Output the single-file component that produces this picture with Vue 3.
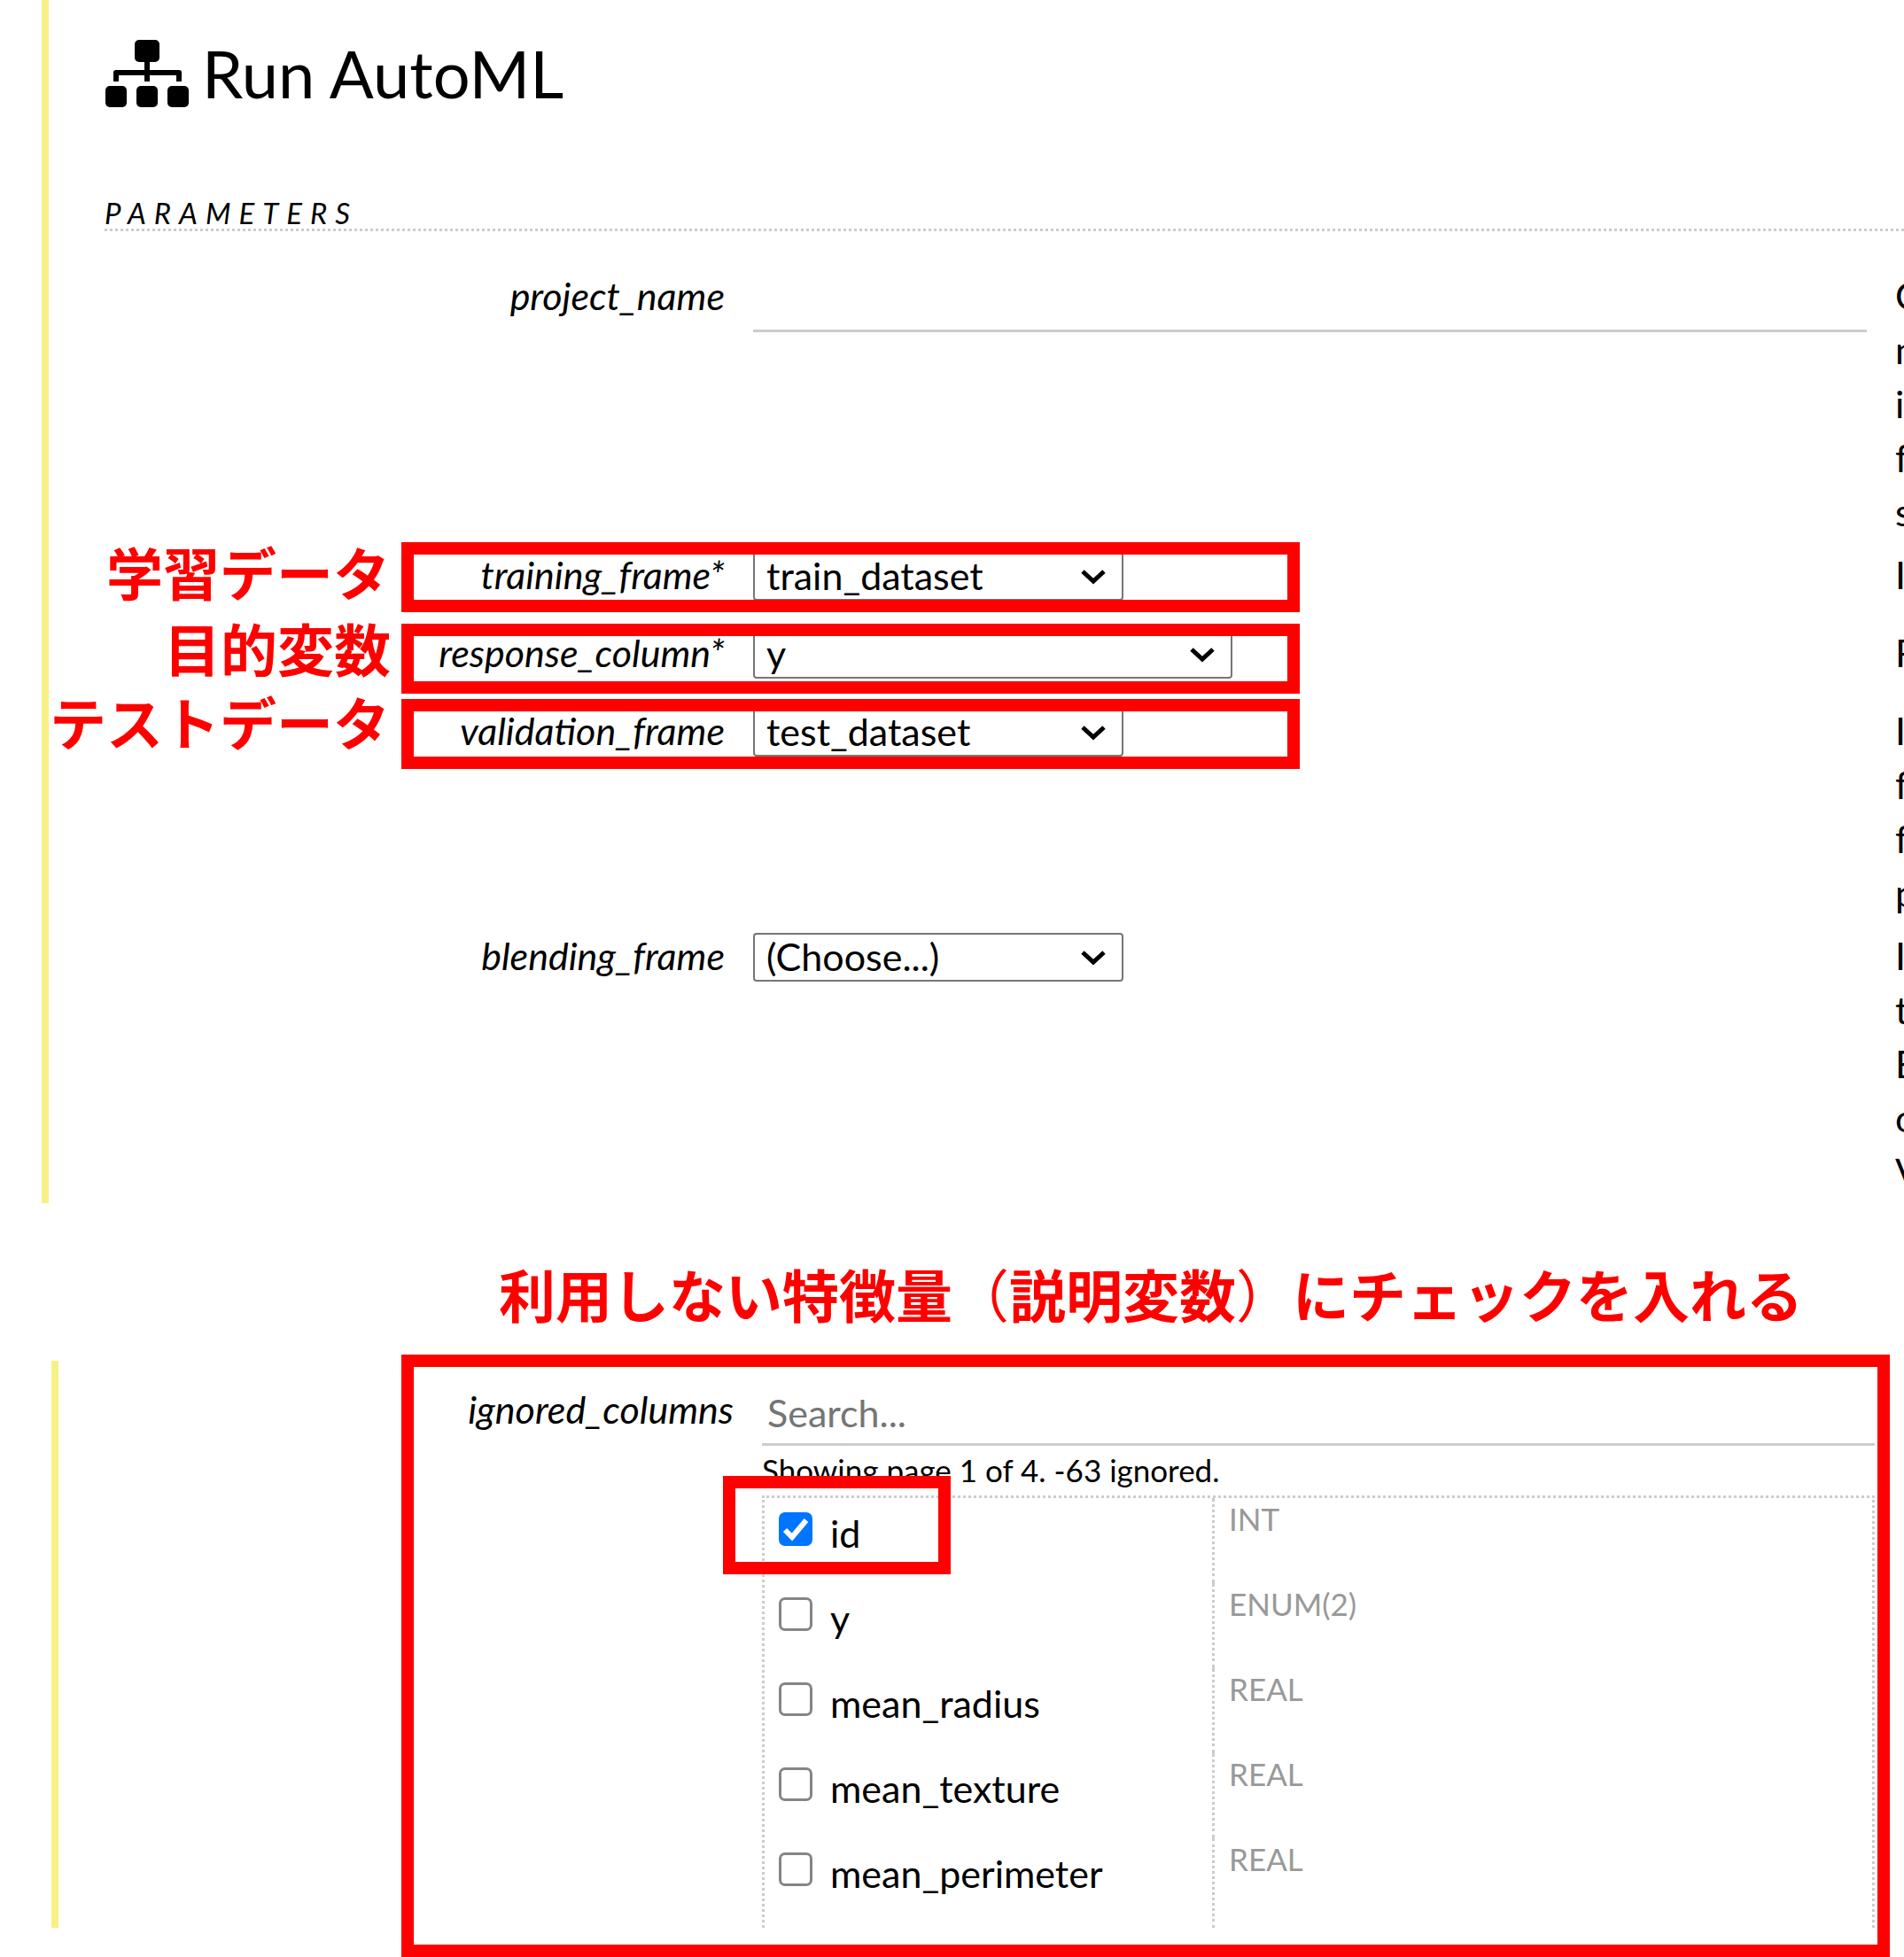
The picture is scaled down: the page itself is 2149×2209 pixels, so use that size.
<script setup>
/**
 * App.vue
 *
 * AutoML parameter form with highlighted fields.
 * The highlights and their notes are laid over the form from the lists below.
 */

import { ref } from 'vue'

const projectName = ref('')
const search = ref('')

// Frame and column pickers, help holds one entry per line
const pickers = ref([
  { name: 'training_frame', required: true, value: 'train_dataset', help: ['I'] },
  { name: 'response_column', required: true, value: 'y', wide: true, help: ['R'] },
  { name: 'validation_frame', value: 'test_dataset', help: ['I', 'f', 'f', 'p'] },
  { name: 'blending_frame', value: '(Choose...)', help: ['I', 't', 'E', 'o', 'V'] }
])

const projectHelp = ['O', 'm', 'i', 'f', 's']

const columns = ref([
  { name: 'id', type: 'INT', ignored: true },
  { name: 'y', type: 'ENUM(2)', ignored: false },
  { name: 'mean_radius', type: 'REAL', ignored: false },
  { name: 'mean_texture', type: 'REAL', ignored: false },
  { name: 'mean_perimeter', type: 'REAL', ignored: false }
])

// Red frames
const marks = [
  { x: 453, y: 612, w: 1014, h: 79 },
  { x: 453, y: 704, w: 1014, h: 79 },
  { x: 453, y: 789, w: 1014, h: 79 },
  { x: 453, y: 1529, w: 1680, h: 680 },
  { x: 816, y: 1666, w: 257, h: 111 }
]

// Notes to the left of the frames, x is the left edge
const notes = [
  { text: '学習データ', x: 120, y: 600 },
  { text: '目的変数', x: 185, y: 686 },
  { text: 'テストデータ', x: 56, y: 769 }
]

const markStyle = (m) => ({
  left: m.x + 'px',
  top: m.y + 'px',
  width: m.w + 'px',
  height: m.h + 'px'
})

const noteStyle = (n) => ({
  left: n.x + 'px',
  top: n.y + 'px'
})
</script>

<template>
  <main class="page">
    <section class="cell">
      <h1 class="title">
        <svg class="title-icon" viewBox="0 0 95 76" aria-hidden="true">
          <rect x="34" y="0" width="28" height="25" rx="5" />
          <rect x="1" y="52" width="24" height="24" rx="5" />
          <rect x="36" y="52" width="24" height="24" rx="5" />
          <rect x="71" y="52" width="24" height="24" rx="5" />
          <path d="M13 47V37H84V47M48 22V47" />
        </svg>
        <span>Run AutoML</span>
      </h1>

      <h2 class="group">PARAMETERS</h2>

      <div class="rows">
        <div class="row">
          <label class="name" for="project_name">project_name</label>
          <div>
            <input id="project_name" v-model="projectName" class="text-input" type="text">
          </div>
          <div class="help">
            <div v-for="(line, i) in projectHelp" :key="i">{{ line }}</div>
          </div>
        </div>

        <div v-for="p in pickers" :key="p.name" class="row">
          <label class="name" :for="p.name">{{ p.name }}<span v-if="p.required">*</span></label>
          <div>
            <div :class="['picker', { wide: p.wide }]">
              <select :id="p.name" v-model="p.value">
                <option>{{ p.value }}</option>
              </select>
              <svg class="chevron" viewBox="0 0 28 18" aria-hidden="true">
                <path d="M2 3L14 14L26 3" />
              </svg>
            </div>
          </div>
          <div class="help">
            <div v-for="(line, i) in p.help" :key="i">{{ line }}</div>
          </div>
        </div>
      </div>
    </section>

    <p class="caption">
      利用しない特徴量<span class="thin">（</span>説明変数<span class="thin">）</span>にチェックを入れる
    </p>

    <section class="cell ignored">
      <label class="name" for="search">ignored_columns</label>
      <div class="ignored-list">
        <input id="search" v-model="search" class="text-input" type="text" placeholder="Search...">
        <div class="status">Showing page 1 of 4. -63 ignored.</div>
        <table class="columns">
          <tbody>
            <tr v-for="c in columns" :key="c.name">
              <td class="column-name">
                <label class="check">
                  <input v-model="c.ignored" type="checkbox">
                  <svg v-if="c.ignored" class="tick" viewBox="0 0 38 38" aria-hidden="true">
                    <path d="M7 20L15 28L31 9" />
                  </svg>
                  <span>{{ c.name }}</span>
                </label>
              </td>
              <td class="column-type">{{ c.type }}</td>
            </tr>
          </tbody>
        </table>
      </div>
    </section>

    <!-- Annotations -->
    <div v-for="(m, i) in marks" :key="'mark' + i" class="mark" :style="markStyle(m)"></div>
    <div v-for="n in notes" :key="n.text" class="note" :style="noteStyle(n)">{{ n.text }}</div>
  </main>
</template>

<style>
body {
  margin: 0;
  background: #fff;
}
</style>

<style scoped>
.page {
  position: relative;
  overflow: hidden;
  padding-bottom: 33px;
  font-family: Lato, "Noto Sans CJK JP", sans-serif;
  font-size: 43px;
  line-height: 61px;
  color: #000;
}

.page * {
  box-sizing: border-box;
}

.cell {
  margin-left: 47px;
  border-left: 8px solid #f8f087;
  padding-left: 63px;
}

/* Heading */
.title {
  display: flex;
  align-items: center;
  gap: 15px;
  margin: 0;
  padding: 35px 0 91px;
  font-size: 74px;
  line-height: 96px;
  font-weight: 400;
}

.title-icon {
  width: 95px;
  height: 76px;
}

.title-icon path {
  fill: none;
  stroke: #000;
  stroke-width: 6;
  stroke-linejoin: round;
}

.group {
  margin: 0 0 40px;
  border-bottom: 3px dotted #ccc;
  font-size: 33px;
  line-height: 36px;
  font-weight: 400;
  font-style: italic;
  letter-spacing: 9px;
}

/* Parameter rows */
.rows {
  display: grid;
  gap: 3px;
}

.row {
  display: grid;
  grid-template-columns: 700px minmax(0, 1fr) 10px;
  column-gap: 32px;
  min-height: 85px;
  padding: 2px 0 5px;
}

.name {
  font-style: italic;
  text-align: right;
}

.help {
  overflow: hidden;
}

.text-input {
  display: block;
  width: 100%;
  height: 72px;
  padding: 0 6px;
  border: 0;
  border-bottom: 3px solid #ccc;
  border-radius: 0;
  background: transparent;
  font: inherit;
  color: inherit;
  outline: none;
}

.text-input::placeholder {
  color: #757575;
  opacity: 1;
}

.picker {
  position: relative;
  width: 418px;
  padding-top: 5px;
}

.picker.wide {
  width: 541px;
}

.picker select {
  appearance: none;
  display: block;
  width: 100%;
  height: 55px;
  padding: 0 56px 2px 13px;
  border: 2px solid #767676;
  border-radius: 4px;
  background: #fff;
  font: inherit;
  line-height: 49px;
  color: #000;
}

.chevron {
  position: absolute;
  right: 20px;
  top: 24px;
  width: 28px;
  height: 18px;
  pointer-events: none;
}

.chevron path {
  fill: none;
  stroke: #000;
  stroke-width: 5;
}

/* Ignored columns */
.caption {
  margin: 0;
  padding: 57px 0 25px 563px;
  font-size: 64px;
  line-height: 96px;
  font-weight: 700;
  color: #f00;
}

.thin {
  font-weight: 400;
}

.ignored {
  display: grid;
  grid-template-columns: 762px minmax(0, 1fr);
  column-gap: 32px;
  height: 640px;
  margin-left: 58px;
  padding: 24px 33px 0 0;
}

.status {
  height: 56px;
  font-size: 35px;
  line-height: 54px;
}

.columns {
  width: 100%;
  border: 3px dotted #ccc;
  border-bottom: 0;
  border-collapse: separate;
  border-spacing: 0;
}

.columns td {
  height: 96px;
  padding: 0;
  vertical-align: top;
}

.columns tr:last-child td {
  height: 101px;
}

.columns .column-name {
  width: 508px;
  padding: 16px 0 0 16px;
  border-right: 3px dotted #ccc;
}

.columns .column-type {
  padding-left: 16px;
  font-size: 35px;
  line-height: 46px;
  color: #999;
}

.check {
  position: relative;
  display: flex;
  gap: 20px;
  line-height: 48px;
}

.check input {
  appearance: none;
  width: 38px;
  height: 38px;
  margin: 0;
  border: 3px solid #858585;
  border-radius: 7px;
  background: #fff;
}

.check input:checked {
  border-color: #0075ff;
  background: #0075ff;
}

.tick {
  position: absolute;
  left: 0;
  top: 0;
  width: 38px;
  height: 38px;
  pointer-events: none;
}

.tick path {
  fill: none;
  stroke: #fff;
  stroke-width: 6;
}

/* Annotations */
.mark {
  position: absolute;
  border: 14px solid #f00;
  pointer-events: none;
}

.note {
  position: absolute;
  font-size: 64px;
  line-height: 96px;
  font-weight: 700;
  white-space: nowrap;
  color: #f00;
}
</style>
